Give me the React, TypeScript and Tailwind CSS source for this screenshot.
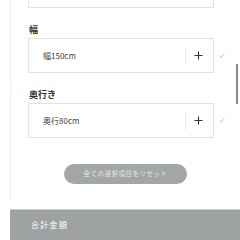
import React from "react";

const font = { fontFamily: '"Noto Sans CJK JP", "Noto Sans", sans-serif' };

const Plus = () => (
  <svg width="9" height="9" viewBox="0 0 9 9" className="text-[#333]">
    <path d="M4.5 0.5v8M0.5 4.5h8" stroke="currentColor" strokeWidth="1.1" />
  </svg>
);

const Check = () => (
  <svg width="6" height="5" viewBox="0 0 6 5">
    <path d="M0.5 2.8L2.2 4.2L5.5 0.6" stroke="#a8c8a0" strokeWidth="0.9" fill="none" />
  </svg>
);

const OptionRow: React.FC<{ value: string }> = ({ value }) => (
  <div className="flex items-center">
    <div className="w-[186px] h-[35px] border border-[#e2e2e2] bg-white flex items-center">
      <div className="flex-1 pl-[14px] text-[8px] text-[#444] leading-none">{value}</div>
      <div className="w-px h-[18px] bg-[#ececec]" />
      <div className="w-[27px] flex items-center justify-center pr-[2px]">
        <Plus />
      </div>
    </div>
    <div className="ml-[5px]">
      <Check />
    </div>
  </div>
);

export default function App() {
  return (
    <div className="w-[240px] h-[240px] overflow-hidden relative bg-white" style={font}>
      <div className="ml-[10px] border-l border-[#f0f0f0] pl-[17px] h-[200px] flex flex-col">
        <div className="w-[186px] h-[35px] -mt-[27px] shrink-0 border border-[#e2e2e2]" />

        <div className="mt-[15px] h-[13px] leading-[13px] text-[9px] font-bold text-[#333] pl-[1px]">幅</div>
        <div className="mt-[2px]">
          <OptionRow value="幅150cm" />
        </div>

        <div className="mt-[15px] h-[13px] leading-[13px] text-[9px] font-bold text-[#333] pl-[1px]">奥行き</div>
        <div className="mt-[2px]">
          <OptionRow value="奥行80cm" />
        </div>

        <div className="mt-[26px] ml-[36px] w-[123px] h-[20px] shrink-0 rounded-full bg-[#a3a6a6] flex items-center justify-center text-[6.5px] text-[#e6e8e8] tracking-[0.5px]">
          全ての選択項目をリセット
        </div>
      </div>

      <div className="ml-[10px] mt-[9px] h-[31px] bg-[#9ea2a2] border-t border-[#c9cccc] flex items-center pl-[21px] text-[8px] text-white tracking-[1.3px]">
        合計金額
      </div>

      <div className="absolute left-[236px] top-[64px] w-[2px] h-[40px] bg-[#8a8a8a]" />
    </div>
  );
}
